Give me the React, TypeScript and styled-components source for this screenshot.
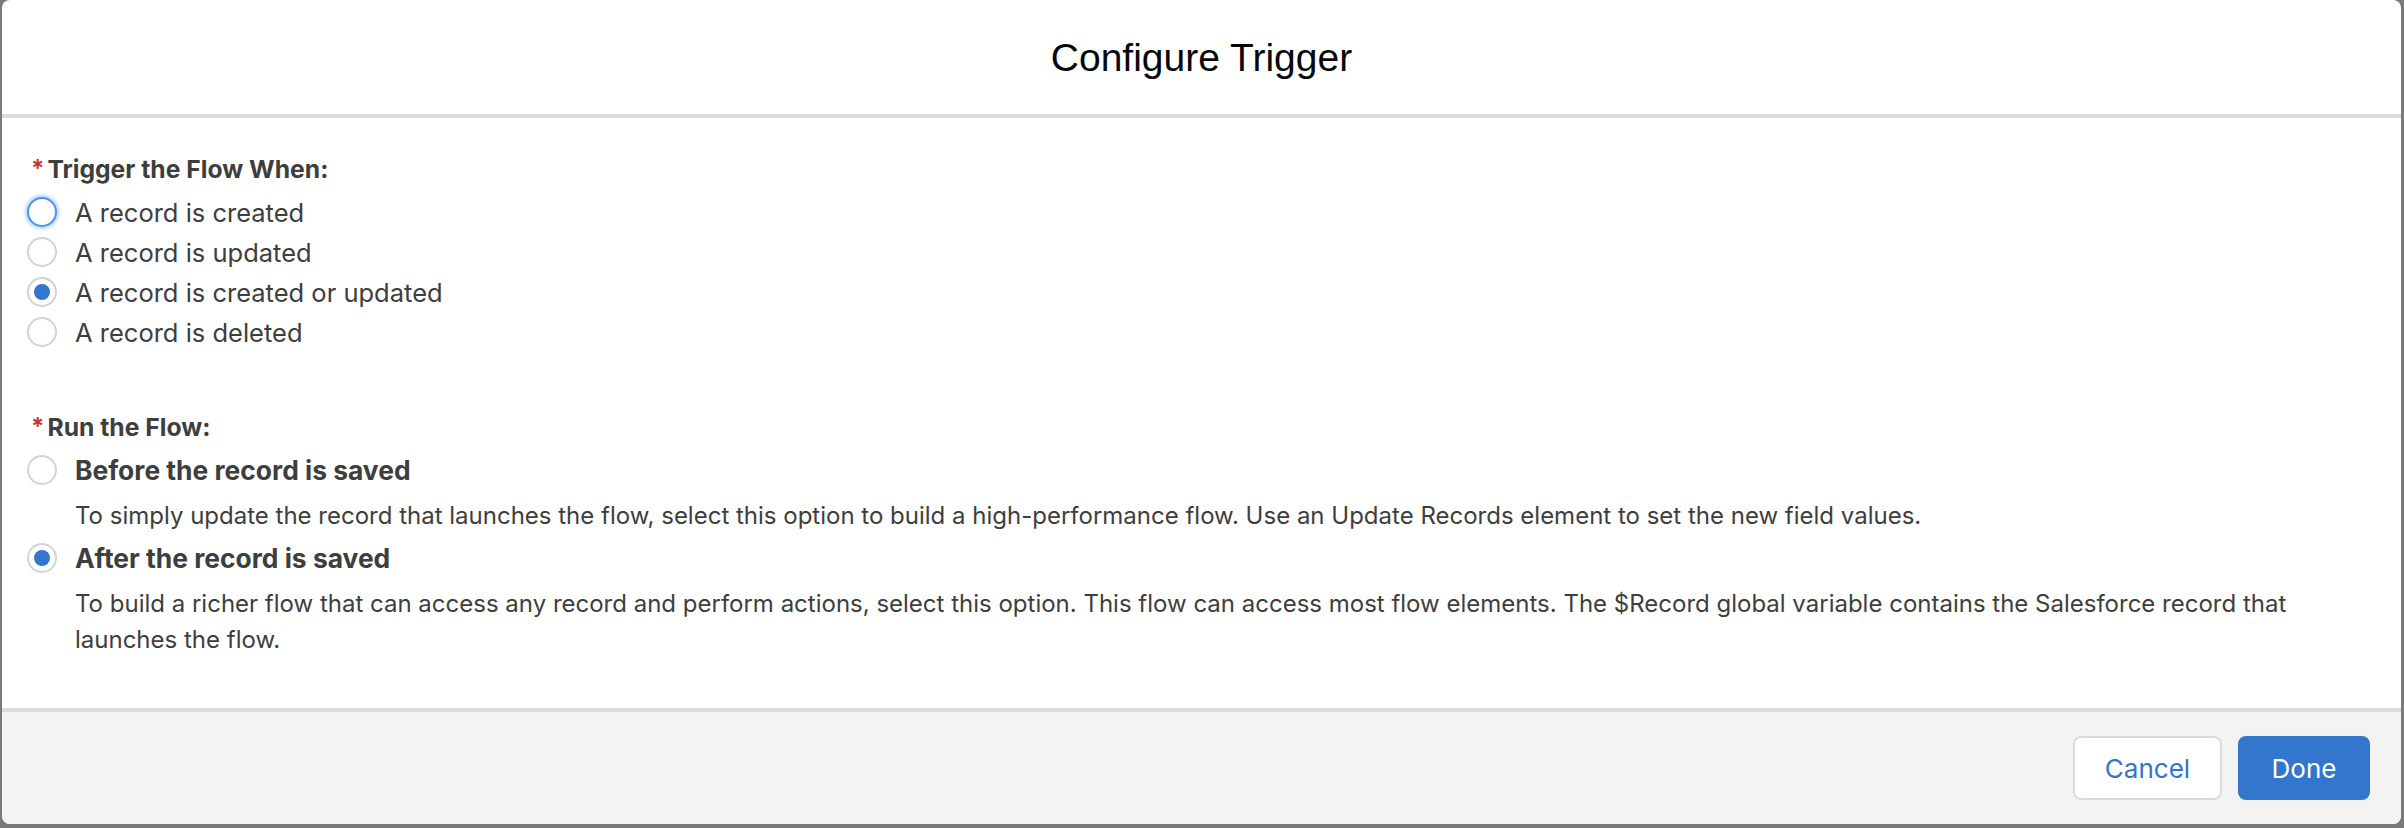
import React from 'react';
import styled, { createGlobalStyle } from 'styled-components';

const GlobalStyle = createGlobalStyle`
  html, body { margin: 0; padding: 0; background: #7a7a7a; }
  body { width: 2404px; height: 828px; overflow: hidden; }
  *, *::before, *::after { box-sizing: border-box; }
`;

const Backdrop = styled.div`
  width: 2404px;
  height: 828px;
  padding: 0 3px 4px 2px;
  background: #7a7a7a;
`;

const Modal = styled.section`
  height: 824px;
  background: #ffffff;
  border-radius: 8px;
  overflow: hidden;
  display: flex;
  flex-direction: column;
  font-family: Inter, "Liberation Sans", Arial, sans-serif;
  color: #3e3e3c;
`;

const Header = styled.header`
  flex: none;
  height: 118px;
  border-bottom: 4px solid #dddbda;
  display: flex;
  align-items: center;
  justify-content: center;
`;

const Title = styled.h2`
  margin: 0;
  font-family: "Liberation Sans", Arial, Helvetica, sans-serif;
  font-weight: 400;
  font-size: 39px;
  line-height: 1;
  color: #080707;
`;

const Body = styled.div`
  flex: 1;
  padding: 33px 32px 0 25px;
`;

const Group = styled.div<{ $spaced?: boolean }>`
  display: flex;
  flex-direction: column;
  margin-top: ${p => (p.$spaced ? '57px' : '0')};
`;

const Legend = styled.div`
  display: flex;
  align-items: center;
  height: 36px;
  padding-left: 4px;
  margin-bottom: 5px;
  font-size: 24.7px;
  font-weight: 700;
  color: #3e3e3c;
`;

const Required = styled.abbr`
  color: #c23934;
  text-decoration: none;
  font-weight: 700;
  font-size: 24px;
  margin-right: 3px;
  position: relative;
  top: -1px;
`;

const Options = styled.div<{ $gap?: number }>`
  display: flex;
  flex-direction: column;
  gap: ${p => p.$gap ?? 0}px;
`;

const OptionRow = styled.label`
  display: flex;
  align-items: center;
  height: 40px;
  gap: 18px;
`;

const RadioCircle = styled.span<{ $checked?: boolean; $focus?: boolean }>`
  flex: none;
  width: 30px;
  height: 30px;
  border-radius: 50%;
  background: #ffffff;
  border: ${p => (p.$focus ? '2px solid #4b95ee' : '2px solid #d4d3d2')};
  box-shadow: ${p => (p.$focus ? '0 0 4px 1px rgba(40, 130, 240, 0.5)' : 'none')};
  display: flex;
  align-items: center;
  justify-content: center;

  &::after {
    content: '';
    display: ${p => (p.$checked ? 'block' : 'none')};
    width: 16px;
    height: 16px;
    border-radius: 50%;
    background: #3276cd;
  }
`;

const OptionText = styled.span<{ $strong?: boolean }>`
  font-size: ${p => (p.$strong ? '26.4px' : '25.5px')};
  font-weight: ${p => (p.$strong ? 700 : 400)};
  color: #3e3e3c;
  white-space: nowrap;
`;

const Description = styled.p`
  margin: 8px 0 0 48px;
  padding-right: 28px;
  font-size: 24px;
  line-height: 36px;
  color: #3e3e3c;
`;

const Footer = styled.footer`
  flex: none;
  height: 116px;
  border-top: 4px solid #dddbda;
  background: #f3f3f3;
  display: flex;
  align-items: center;
  justify-content: flex-end;
  gap: 16px;
  padding-right: 31px;
`;

const Button = styled.button<{ $brand?: boolean }>`
  height: 64px;
  padding: 0;
  border-radius: 8px;
  font-family: Inter, "Liberation Sans", Arial, sans-serif;
  font-size: 26px;
  cursor: pointer;
  border: 2px solid ${p => (p.$brand ? '#3276cd' : '#dddbda')};
  background: ${p => (p.$brand ? '#3276cd' : '#ffffff')};
  color: ${p => (p.$brand ? '#ffffff' : '#3275cc')};
  width: ${p => (p.$brand ? '132px' : '149px')};
`;

type Opt = { label: string; checked?: boolean; focus?: boolean };

const triggerOptions: Opt[] = [
  { label: 'A record is created', focus: true },
  { label: 'A record is updated' },
  { label: 'A record is created or updated', checked: true },
  { label: 'A record is deleted' },
];

const runOptions = [
  {
    label: 'Before the record is saved',
    checked: false,
    desc: 'To simply update the record that launches the flow, select this option to build a high-performance flow. Use an Update Records element to set the new field values.',
  },
  {
    label: 'After the record is saved',
    checked: true,
    desc: 'To build a richer flow that can access any record and perform actions, select this option. This flow can access most flow elements. The $Record global variable contains the Salesforce record that launches the flow.',
  },
];

export default function App() {
  return (
    <>
      <GlobalStyle />
      <Backdrop>
        <Modal>
          <Header>
            <Title>Configure Trigger</Title>
          </Header>
          <Body>
            <Group>
              <Legend>
                <Required title="required">*</Required>
                Trigger the Flow When:
              </Legend>
              <Options>
                {triggerOptions.map(o => (
                  <OptionRow key={o.label}>
                    <RadioCircle $checked={o.checked} $focus={o.focus} />
                    <OptionText>{o.label}</OptionText>
                  </OptionRow>
                ))}
              </Options>
            </Group>
            <Group $spaced>
              <Legend>
                <Required title="required">*</Required>
                Run the Flow:
              </Legend>
              <Options $gap={4}>
                {runOptions.map(o => (
                  <div key={o.label}>
                    <OptionRow>
                      <RadioCircle $checked={o.checked} />
                      <OptionText $strong>{o.label}</OptionText>
                    </OptionRow>
                    <Description>{o.desc}</Description>
                  </div>
                ))}
              </Options>
            </Group>
          </Body>
          <Footer>
            <Button>Cancel</Button>
            <Button $brand>Done</Button>
          </Footer>
        </Modal>
      </Backdrop>
    </>
  );
}
